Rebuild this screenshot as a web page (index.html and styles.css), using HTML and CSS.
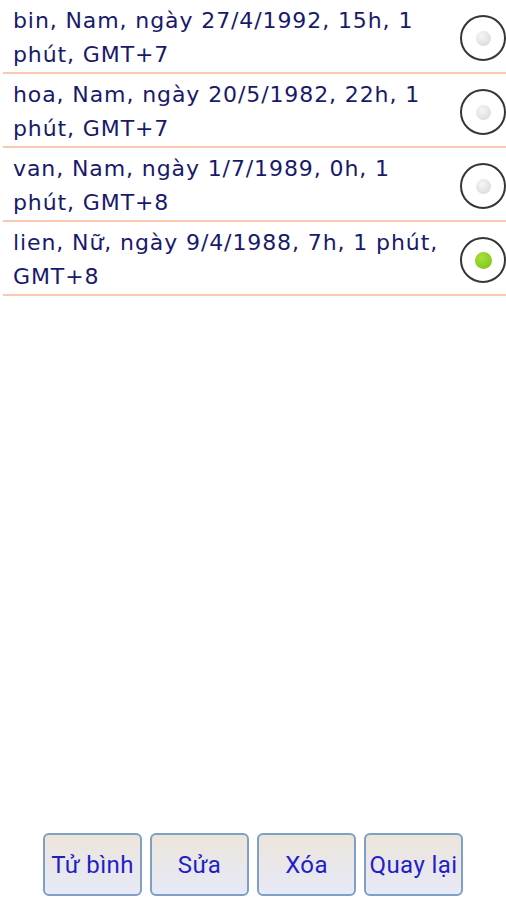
FILE: index.html
```html
<!DOCTYPE html>
<html>
<head>
<meta charset="utf-8">
<link rel="stylesheet" href="styles.css">
</head>
<body>
<div class="screen">
  <ul class="list">
    <li class="row">
      <span class="label">bin, Nam, ngày 27/4/1992, 15h, 1 phút, GMT+7</span>
      <span class="radio"><span class="dot"></span></span>
    </li>
    <li class="row">
      <span class="label">hoa, Nam, ngày 20/5/1982, 22h, 1 phút, GMT+7</span>
      <span class="radio"><span class="dot"></span></span>
    </li>
    <li class="row">
      <span class="label">van, Nam, ngày 1/7/1989, 0h, 1 phút, GMT+8</span>
      <span class="radio"><span class="dot"></span></span>
    </li>
    <li class="row">
      <span class="label">lien, Nữ, ngày 9/4/1988, 7h, 1 phút, GMT+8</span>
      <span class="radio checked"><span class="dot"></span></span>
    </li>
  </ul>
  <div class="actions">
    <button class="btn">Tử bình</button>
    <button class="btn">Sửa</button>
    <button class="btn">Xóa</button>
    <button class="btn">Quay lại</button>
  </div>
</div>
</body>
</html>
```
FILE: styles.css
```css
html, body {
  margin: 0;
  padding: 0;
  background: #ffffff;
}
.screen {
  width: 506px;
  height: 900px;
  display: flex;
  flex-direction: column;
  font-family: Roboto, "Noto Sans", sans-serif;
}
.list {
  list-style: none;
  margin: 0 0 0 3px;
  padding: 0;
  flex: 1;
}
.row {
  display: flex;
  align-items: center;
  border-bottom: 2px solid #fbc9b0;
  padding: 4px 0 0 10px;
  height: 68px;
}
.label {
  width: 437px;
  font-family: "DejaVu Sans", sans-serif;
  font-size: 22px;
  letter-spacing: 0.9px;
  line-height: 34px;
  color: #19196b;
}
.radio {
  margin-left: 10px;
  width: 42px;
  height: 42px;
  border: 2px solid #363636;
  border-radius: 50%;
  display: flex;
  align-items: center;
  justify-content: center;
  box-sizing: content-box;
}
.dot {
  width: 15px;
  height: 15px;
  border-radius: 50%;
  background: radial-gradient(circle at 40% 35%, #f6f6f6, #d4d4d4);
}
.radio.checked .dot {
  width: 17px;
  height: 17px;
  background: radial-gradient(circle at 40% 35%, #a6e23c, #74c010);
}
.actions {
  display: flex;
  justify-content: center;
  gap: 8px;
  padding: 0 0 4px 0;
  height: 63px;
}
.btn {
  width: 99px;
  height: 63px;
  border: 2px solid #7f9fc4;
  border-radius: 6px;
  background: linear-gradient(#ece5da, #e7e9f8);
  color: #1f1fc8;
  font-family: Roboto, "Noto Sans", sans-serif;
  font-size: 24px;
  letter-spacing: 0.4px;
  padding: 0;
  margin: 0;
}
```
